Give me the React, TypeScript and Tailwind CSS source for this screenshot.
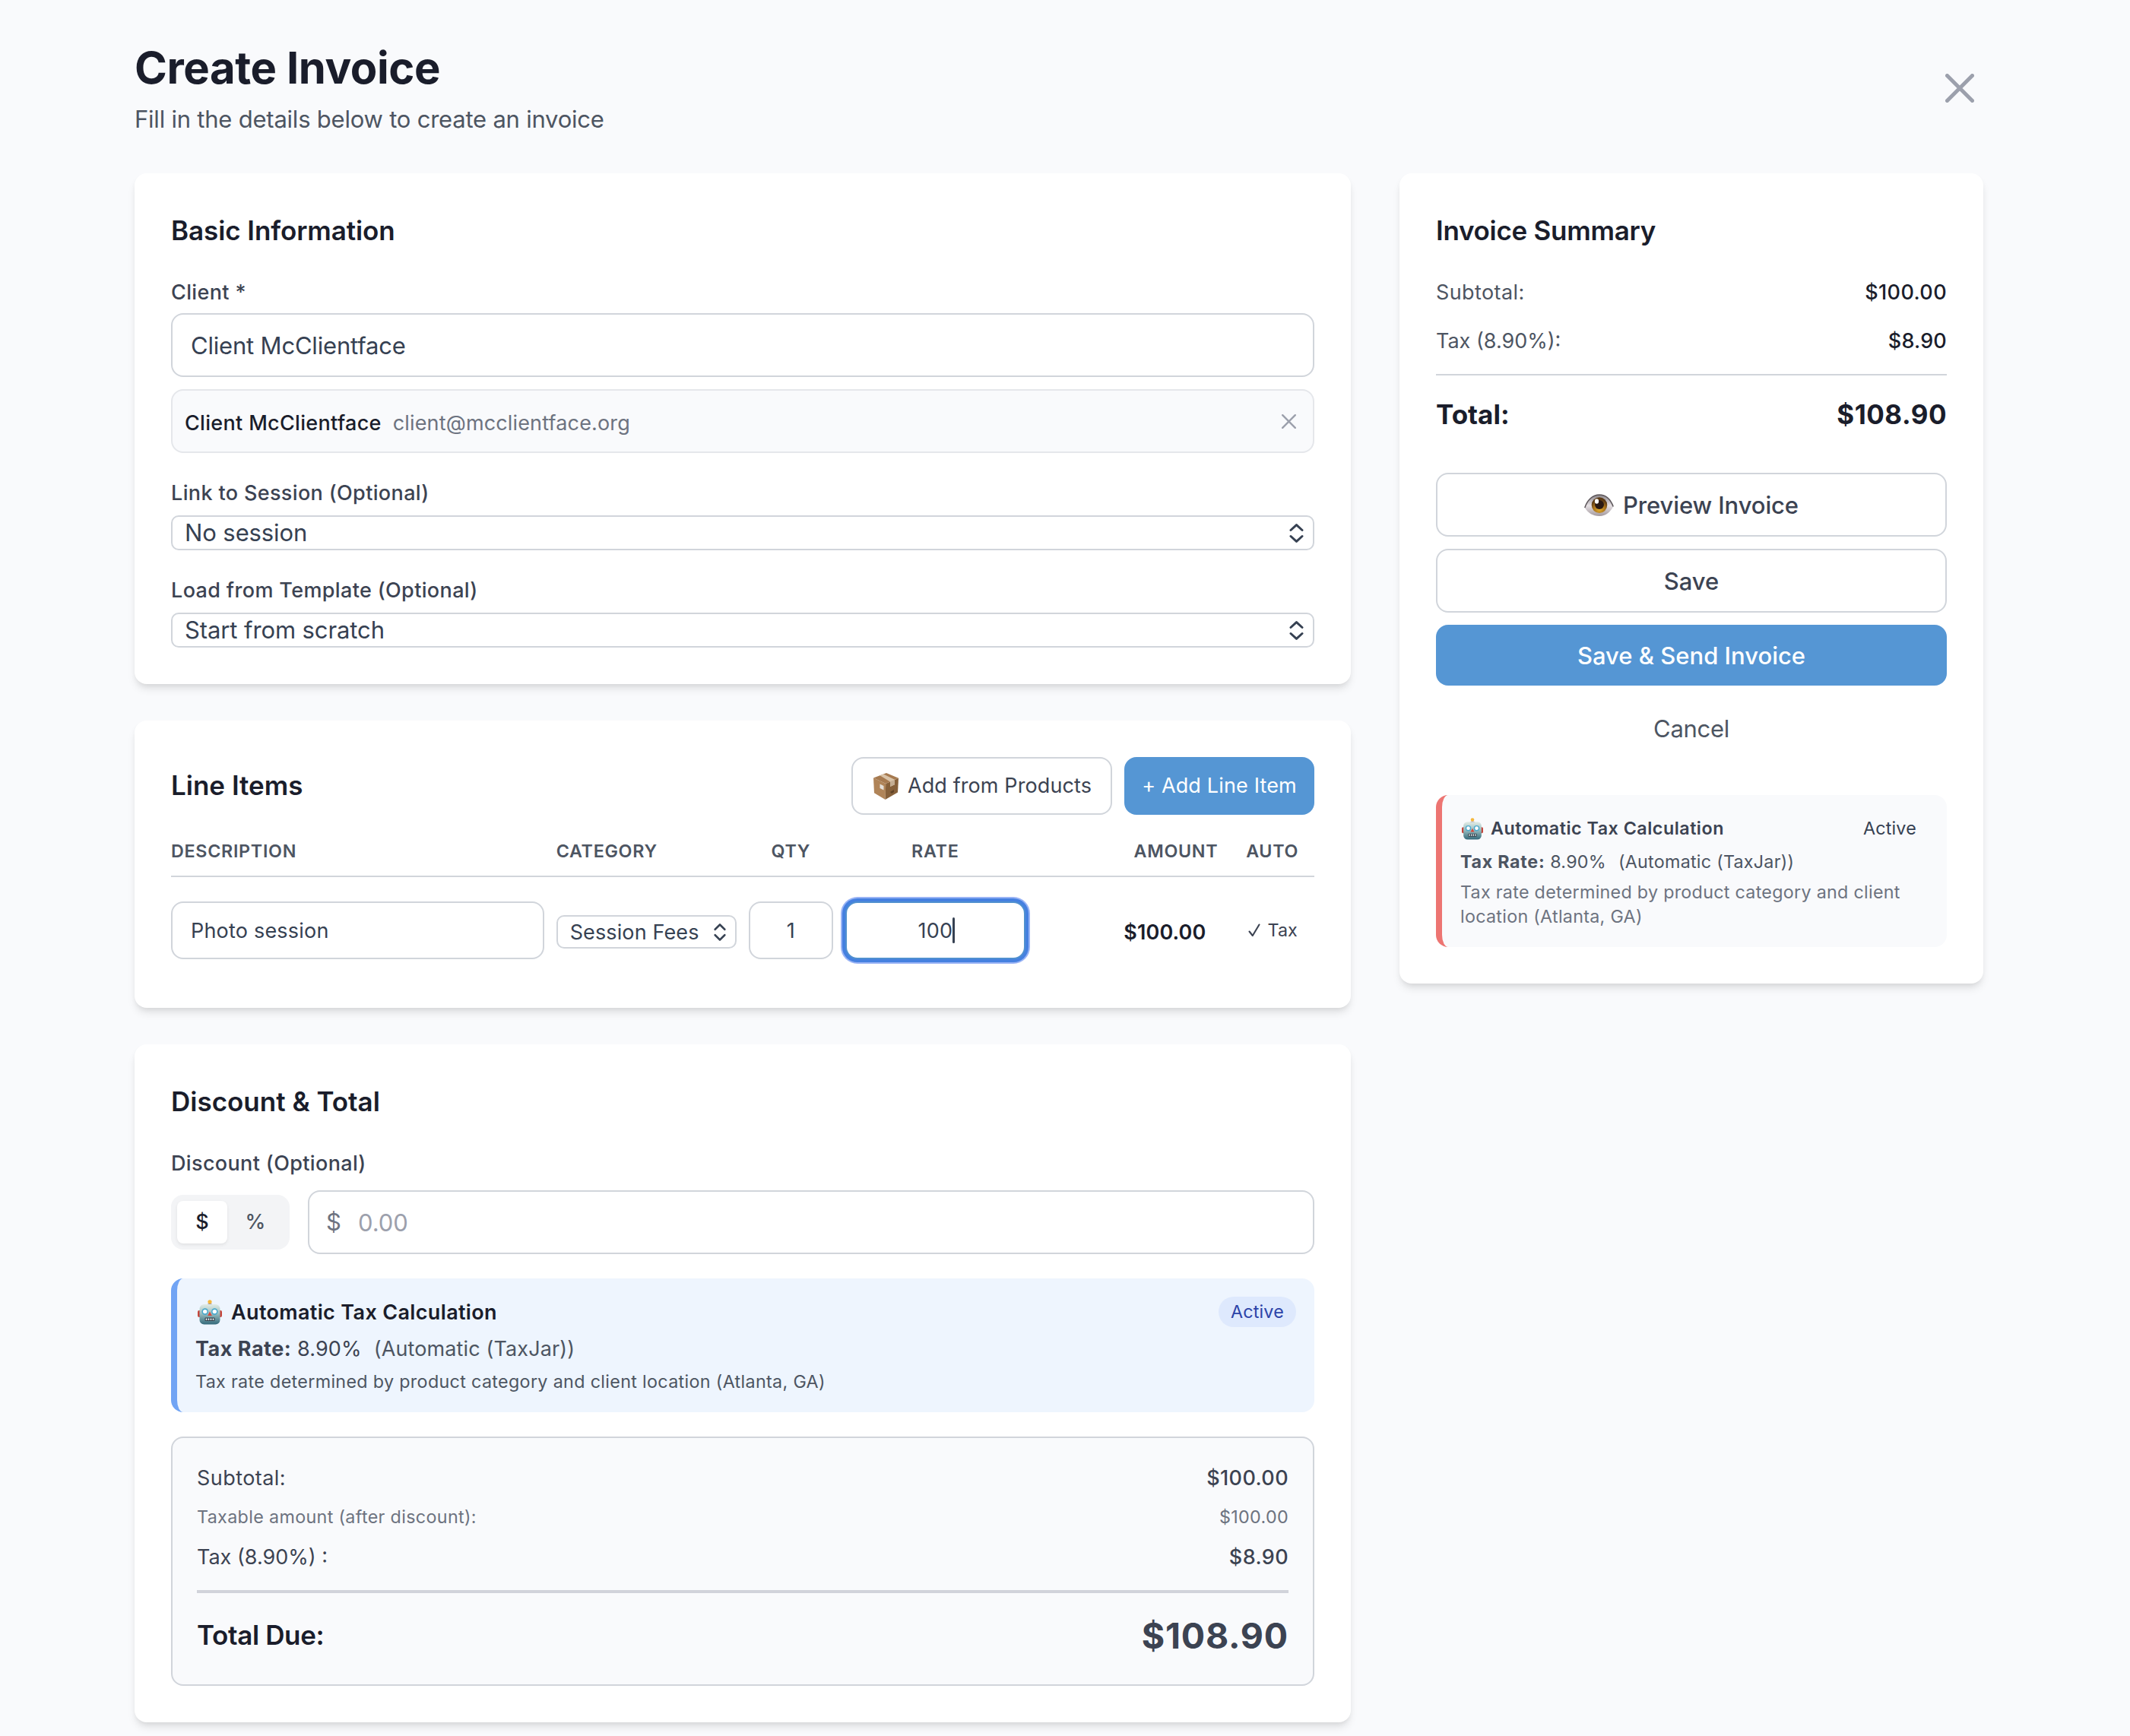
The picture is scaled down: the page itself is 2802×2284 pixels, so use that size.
import { useId, useState, type ReactNode } from "react";
import clsx from "clsx";

const TAX_NOTE = "Tax rate determined by product category and client location (Atlanta, GA)";

const text = {
  heading: "text-[35px] leading-[54px] font-semibold text-[#1a1d2b]",
  label: "text-[27px] leading-[42px] font-medium tracking-[0.36px] text-[#3c4352]",
  column: "text-[23.3px] leading-9 font-semibold uppercase tracking-[0.7px] text-[#4d5562]",
};

function CrossIcon({ size, stroke }: { size: number; stroke: number }) {
  const near = stroke / 2;
  const far = size - stroke / 2;
  return (
    <svg width={size} height={size} fill="none" stroke="#9ca0ac" strokeWidth={stroke} strokeLinecap="round">
      <path d={`M${near} ${near}L${far} ${far}M${far} ${near}L${near} ${far}`} />
    </svg>
  );
}

function ChevronsIcon({ small = false }: { small?: boolean }) {
  return (
    <svg
      width={small ? 16 : 19}
      height={small ? 23 : 25}
      viewBox="0 0 19 25"
      preserveAspectRatio="none"
      fill="none"
      stroke="#364152"
      strokeWidth="3"
      strokeLinecap="round"
      strokeLinejoin="round"
    >
      <path d="M2 8.5L9.5 1.6L17 8.5M2 16.5L9.5 23.4L17 16.5" />
    </svg>
  );
}

function BoxIcon() {
  return (
    <svg width="33" height="35" viewBox="0 0 33 35">
      <path d="M0 6.5L16.2 14L15.6 35L1 26.2Z" fill="#b08458" />
      <path d="M33 6.8L16.2 14L15.6 35L32 25.6Z" fill="#86603a" />
      <path d="M0 6.5L17 0L33 6.8L16.2 14Z" fill="#a67a50" />
      <path d="M8.5 3.3L13.2 1.4L28 8.8V15.2L22 18V11.6Z" fill="#d9c3a8" />
      <path d="M22 11.6L28 8.8V15.2L22 18Z" fill="#c4ad92" />
      <path d="M8.5 14.5L13.5 17V22.5L8.5 20Z" fill="#e4e0da" />
      <path d="M22 25L27 22V25L24 27Z" fill="#5f4226" />
    </svg>
  );
}

function EyeIcon() {
  const id = useId();
  return (
    <svg width="39" height="30" viewBox="0 0 39 30">
      <defs>
        <linearGradient id={`${id}w`} x1="0" y1="0" x2="0" y2="1">
          <stop offset="0" stopColor="#8b868a" />
          <stop offset="0.5" stopColor="#e6e1e4" />
          <stop offset="1" stopColor="#a3999e" />
        </linearGradient>
        <radialGradient id={`${id}i`} cx="0.5" cy="0.75" r="0.6">
          <stop offset="0" stopColor="#e8b22d" />
          <stop offset="0.6" stopColor="#a8721c" />
          <stop offset="1" stopColor="#5b3a14" />
        </radialGradient>
      </defs>
      <path d="M0.8 18C4 8 11 1 20 1S35 8 38.2 16.5C34 24 28.5 29 20 29S5 25 0.8 18Z" fill={`url(#${id}w)`} />
      <path d="M0.8 18C4 8 11 1 20 1S35 8 38.2 16.5" fill="none" stroke="#5d575b" strokeWidth="1.6" />
      <circle cx="20" cy="14.6" r="10.3" fill={`url(#${id}i)`} />
      <circle cx="20" cy="14" r="6" fill="#2b1a12" />
      <ellipse cx="16.5" cy="9.5" rx="2.6" ry="3.3" fill="#fff" />
    </svg>
  );
}

function RobotIcon({ width, height }: { width: number; height: number }) {
  const id = useId();
  return (
    <svg width={width} height={height} viewBox="0 0 32 33">
      <defs>
        <linearGradient id={id} x1="0" y1="0" x2="0" y2="1">
          <stop offset="0" stopColor="#e3ece6" />
          <stop offset="0.45" stopColor="#9cc0c2" />
          <stop offset="1" stopColor="#33697a" />
        </linearGradient>
      </defs>
      <rect x="0" y="14" width="5" height="9" rx="2" fill="#c4453b" />
      <rect x="27" y="14" width="5" height="9" rx="2" fill="#c4453b" />
      <path d="M12 7.5C12 4.5 20 4.5 20 7.5Z" fill="#5b4a80" />
      <circle cx="16" cy="2.8" r="2.6" fill="#f6b73c" />
      <rect x="2.5" y="6" width="27" height="26.5" rx="6" fill={`url(#${id})`} />
      <circle cx="9.7" cy="15.6" r="4.3" fill="#4ba9cc" />
      <circle cx="22.3" cy="15.6" r="4.3" fill="#4ba9cc" />
      <circle cx="9.7" cy="15.6" r="2.7" fill="#fff" />
      <circle cx="22.3" cy="15.6" r="2.7" fill="#fff" />
      <path d="M16 15.5L18.8 21H13.2Z" fill="#d9493b" />
      <rect x="9.5" y="23.5" width="13" height="4.6" rx="1" fill="#34424c" />
      <path d="M11.5 24.5V27M14.5 24.5V27M17.5 24.5V27M20.5 24.5V27" stroke="#e8eef0" strokeWidth="1.6" />
    </svg>
  );
}

function Card({ className, children }: { className?: string; children: ReactNode }) {
  return (
    <section
      className={clsx(
        "rounded-2xl bg-white px-12 shadow-[0_8px_12px_-2px_rgba(0,0,0,0.1),0_4px_8px_-4px_rgba(0,0,0,0.1)]",
        className,
      )}
    >
      {children}
    </section>
  );
}

function SelectField({ value }: { value: string }) {
  return (
    <div className="flex h-[46px] items-center justify-between rounded-[10px] border-2 border-[#d1d5db] bg-white pr-3 pl-4">
      <span className="text-[31px] leading-10 tracking-[-0.1px] text-[#364152]">{value}</span>
      <ChevronsIcon />
    </div>
  );
}

function SummaryRow({ label, amount, className }: { label: string; amount: string; className: string }) {
  return (
    <div className={clsx("flex items-center justify-between", className)}>
      <span>{label}</span>
      <span>{amount}</span>
    </div>
  );
}

function BasicInformation() {
  return (
    <Card className="h-[672px] pt-12">
      <h2 className={clsx(text.heading, "tracking-[-0.08px]")}>Basic Information</h2>

      <p className={clsx(text.label, "mt-[34px]")}>Client *</p>
      <div className="mt-1.5 flex h-[84px] items-center rounded-2xl border-2 border-[#d1d5db] bg-white px-6 pt-0.5 text-[31px] leading-10 tracking-[-0.19px] text-[#364152]">
        Client McClientface
      </div>
      <div className="mt-4 flex h-[84px] items-center justify-between rounded-2xl border-2 border-[#e5e7eb] bg-[#f9fafc] pr-[22px] pl-4">
        <div className="flex gap-[15px] pt-1.5 text-[27px] leading-10">
          <span className="font-medium tracking-[0.32px] text-[#1a1d2b]">Client McClientface</span>
          <span className="tracking-[0.15px] text-[#6d7380]">client@mcclientface.org</span>
        </div>
        <CrossIcon size={19} stroke={2.4} />
      </div>

      <p className={clsx(text.label, "mt-8 mb-2")}>Link to Session (Optional)</p>
      <SelectField value="No session" />

      <p className={clsx(text.label, "mt-8 mb-2")}>Load from Template (Optional)</p>
      <SelectField value="Start from scratch" />
    </Card>
  );
}

function LineItems() {
  const inputClassName =
    "flex h-[76px] items-center rounded-2xl border-2 bg-white pt-0.5 text-[27px] leading-10 tracking-[0.2px] text-[#364152]";

  return (
    <Card className="h-[378px] pt-12">
      <div className="flex h-[76px] items-center justify-between">
        <h2 className={clsx(text.heading, "pb-0.5")}>Line Items</h2>
        <div className="flex gap-4">
          <button
            type="button"
            className="flex h-[76px] w-[343px] items-center justify-center gap-3 rounded-2xl border-2 border-[#d1d5db] bg-white pt-px pl-0.5 text-[27px] tracking-[0.1px] text-[#3c4352]"
          >
            <BoxIcon />
            Add from Products
          </button>
          <button
            type="button"
            className="h-[76px] w-[250px] rounded-2xl bg-[#5596d4] pt-px text-[27px] tracking-[0.15px] text-white"
          >
            + Add Line Item
          </button>
        </div>
      </div>

      <div className="mt-[30px] grid grid-cols-12 gap-4 border-b-2 border-[#d1d5db] pb-3.5">
        <span className={clsx(text.column, "col-span-4")}>Description</span>
        <span className={clsx(text.column, "col-span-2")}>Category</span>
        <span className={clsx(text.column, "text-center")}>Qty</span>
        <span className={clsx(text.column, "col-span-2 text-center")}>Rate</span>
        <span className={clsx(text.column, "col-span-2 text-right")}>Amount</span>
        <span className={clsx(text.column, "text-center")}>Auto</span>
      </div>

      <div className="grid grid-cols-12 items-center gap-4 pt-8">
        <div className={clsx(inputClassName, "col-span-4 border-[#d1d5db] px-6")}>Photo session</div>
        <div className="col-span-2 mt-1 flex h-11 items-center justify-between rounded-[10px] border-2 border-[#d1d5db] bg-white pr-3 pl-4 text-[27px] leading-10 tracking-[0.12px] text-[#364152]">
          <span className="pt-px">Session Fees</span>
          <ChevronsIcon small />
        </div>
        <div className={clsx(inputClassName, "justify-center border-[#d1d5db]")}>1</div>
        <div
          className={clsx(
            inputClassName,
            "col-span-2 justify-center border-[#5090cf] shadow-[0_0_0_4px_#4580e0,0_0_0_6px_#99b3f5]",
          )}
        >
          <span className="relative">
            100
            <span className="absolute top-0.5 -right-[3px] h-[34px] w-[3px] rounded-full bg-[#364152]" />
          </span>
        </div>
        <span className="col-span-2 pt-1.5 pr-4 text-right text-[27px] leading-10 font-semibold tracking-[0.1px] text-[#1a1d2b]">
          $100.00
        </span>
        <span className="flex items-center justify-center gap-2.5 pl-px text-[23.3px] leading-9 text-[#3c4352]">
          <svg width="16" height="18" fill="none" stroke="#3c4352" strokeWidth="2.1" strokeLinecap="round" strokeLinejoin="round">
            <path d="M1.5 10.5L5.8 16L14.5 1.5" />
          </svg>
          Tax
        </span>
      </div>
    </Card>
  );
}

function DiscountAndTotal() {
  const [discountType, setDiscountType] = useState<"$" | "%">("$");

  return (
    <Card className="h-[892px] pt-12">
      <h2 className={text.heading}>Discount &amp; Total</h2>

      <p className={clsx(text.label, "mt-[34px]")}>Discount (Optional)</p>
      <div className="mt-3.5 flex items-center gap-6">
        <div className="flex h-[72px] w-[156px] items-center rounded-2xl bg-[#f3f4f6] px-2">
          {(["$", "%"] as const).map((type) => (
            <button
              key={type}
              type="button"
              onClick={() => setDiscountType(type)}
              className={clsx(
                "h-14 flex-1 rounded-lg pt-px text-[27px] font-medium",
                discountType === type
                  ? "max-w-[66px] bg-white text-[#1a1d2b] shadow-[0_2px_4px_rgba(0,0,0,0.08)]"
                  : "text-[#4d5562]",
              )}
            >
              {type}
            </button>
          ))}
        </div>
        <div className="flex h-[84px] flex-1 items-center gap-[22px] rounded-2xl border-2 border-[#d1d5db] bg-white px-[22px] text-[31px] leading-10">
          <span className="text-[#6d7380]">$</span>
          <span className="pt-0.5 text-[#9ca0ac]">0.00</span>
        </div>
      </div>

      <div className="mt-8 h-44 rounded-2xl border-l-8 border-[#71a4f4] bg-[#eef5fe] pt-6 pr-6 pl-6">
        <div className="flex h-10 items-center justify-between">
          <span className="flex items-center gap-3 text-[27px] leading-10 font-semibold tracking-[0.35px] text-[#1a1d2b]">
            <span className="pl-[3px]">
              <RobotIcon width={32} height={33} />
            </span>
            <span className="pt-0.5">Automatic Tax Calculation</span>
          </span>
          <span className="rounded-full bg-[#dee9fd] px-4 text-[23.3px] leading-10 tracking-[0.2px] text-[#2c43a8]">
            Active
          </span>
        </div>
        <p className="mt-[9px] text-[27px] leading-10 tracking-[0.13px] text-[#4d5562]">
          <span className="font-bold tracking-[0.5px] text-[#3c4352]">Tax Rate:</span>{" "}
          <span className="text-[#3c4352]">8.90%</span>
          <span className="ml-4">(Automatic (TaxJar))</span>
        </p>
        <p className="mt-[5px] text-[23.3px] leading-9 tracking-[0.33px] text-[#4d5562]">{TAX_NOTE}</p>
      </div>

      <div className="mt-8 h-[328px] rounded-2xl border-2 border-[#d1d5db] bg-[#f9fafc] p-8">
        <div className="flex justify-between text-[27px] leading-[42px] text-[#3c4352]">
          <span className="tracking-[0.45px]">Subtotal:</span>
          <span className="font-medium tracking-[0.39px]">$100.00</span>
        </div>
        <SummaryRow
          label="Taxable amount (after discount):"
          amount="$100.00"
          className="mt-3 text-[23.3px] leading-9 tracking-[0.34px] text-[#6d7380]"
        />
        <div className="mt-3.5 flex justify-between text-[27px] leading-[42px] text-[#3c4352]">
          <span>Tax (8.90%) :</span>
          <span className="font-medium tracking-[0.39px]">$8.90</span>
        </div>
        <div className="mt-[22px] flex items-center justify-between border-t-4 border-[#d1d3da] pt-6">
          <span className={clsx(text.heading, "pb-0.5 tracking-[-0.35px]")}>Total Due:</span>
          <span className="pt-px text-[46.5px] leading-[63px] font-bold tracking-[0.8px] text-[#3c4352]">$108.90</span>
        </div>
      </div>
    </Card>
  );
}

function InvoiceSummary() {
  const buttonClassName = "flex w-full items-center justify-center rounded-2xl pt-0.5 text-[31px] leading-10";

  return (
    <Card className="h-[1066px] w-[768px] pt-12">
      <h2 className={clsx(text.heading, "tracking-[-0.28px]")}>Invoice Summary</h2>

      <div className="mt-[34px] flex justify-between text-[27px] leading-[42px]">
        <span className="tracking-[0.4px] text-[#4d5562]">Subtotal:</span>
        <span className="font-medium tracking-[0.39px] text-[#1a1d2b]">$100.00</span>
      </div>
      <div className="mt-[22px] flex justify-between text-[27px] leading-[42px]">
        <span className="text-[#4d5562]">Tax (8.90%):</span>
        <span className="font-medium tracking-[0.2px] text-[#1a1d2b]">$8.90</span>
      </div>
      <div className="mt-[22px] flex justify-between border-t-2 border-[#d1d5db] pt-6 text-[35px] leading-[54px] font-bold text-[#1a1d2b]">
        <span>Total:</span>
        <span className="tracking-[0.5px]">$108.90</span>
      </div>

      <div className="mt-[50px] flex flex-col gap-4">
        <button
          type="button"
          className={clsx(
            buttonClassName,
            "h-[84px] gap-3 border-2 border-[#d1d5db] bg-white font-medium tracking-[-0.12px] text-[#3c4352]",
          )}
        >
          <EyeIcon />
          Preview Invoice
        </button>
        <button
          type="button"
          className={clsx(buttonClassName, "h-[84px] border-2 border-[#d1d5db] bg-white font-medium text-[#3c4352]")}
        >
          Save
        </button>
        <button type="button" className={clsx(buttonClassName, "h-20 bg-[#5596d4] font-medium text-white")}>
          Save &amp; Send Invoice
        </button>
        <button type="button" className={clsx(buttonClassName, "h-20 tracking-[-0.3px] text-[#4d5562]")}>
          Cancel
        </button>
      </div>

      <div className="mt-12 h-[200px] rounded-2xl border-l-8 border-[#ed7572] bg-[#f9fafc] pt-6 pr-6 pl-6 text-[23.3px]">
        <div className="flex h-10 items-center justify-between">
          <span className="flex items-center gap-2.5 font-semibold tracking-[0.5px] text-[#3c4352]">
            <span className="pl-0.5">
              <RobotIcon width={28} height={29} />
            </span>
            Automatic Tax Calculation
          </span>
          <span className="px-4 tracking-[0.2px] text-[#364152]">Active</span>
        </div>
        <p className="mt-1.5 leading-9 tracking-[0.26px] text-[#4d5562]">
          <span className="font-bold tracking-[0.7px]">Tax Rate:</span> 8.90%
          <span className="ml-4">(Automatic (TaxJar))</span>
        </p>
        <p className="mt-1.5 leading-8 tracking-[0.28px] text-[#6d7380]">{TAX_NOTE}</p>
      </div>
    </Card>
  );
}

export default function App() {
  return (
    <div className="h-[2284px] overflow-hidden bg-[#f9fafc] pt-[53px] pr-4 font-['Inter',sans-serif]">
      <div className="mx-auto w-[2432px]">
        <header className="flex h-32 items-center justify-between pr-3">
          <div>
            <h1 className="text-[58px] leading-[72px] font-bold tracking-[-0.42px] text-[#1a1d2b]">Create Invoice</h1>
            <p className="mt-2 text-[31px] leading-[48px] tracking-[-0.22px] text-[#4d5562]">
              Fill in the details below to create an invoice
            </p>
          </div>
          <button type="button" aria-label="Close" className="pb-0.5">
            <CrossIcon size={38} stroke={5} />
          </button>
        </header>

        <main className="mt-[47px] flex items-start gap-16">
          <div className="flex w-[1600px] flex-col gap-12">
            <BasicInformation />
            <LineItems />
            <DiscountAndTotal />
          </div>
          <InvoiceSummary />
        </main>
      </div>
    </div>
  );
}
